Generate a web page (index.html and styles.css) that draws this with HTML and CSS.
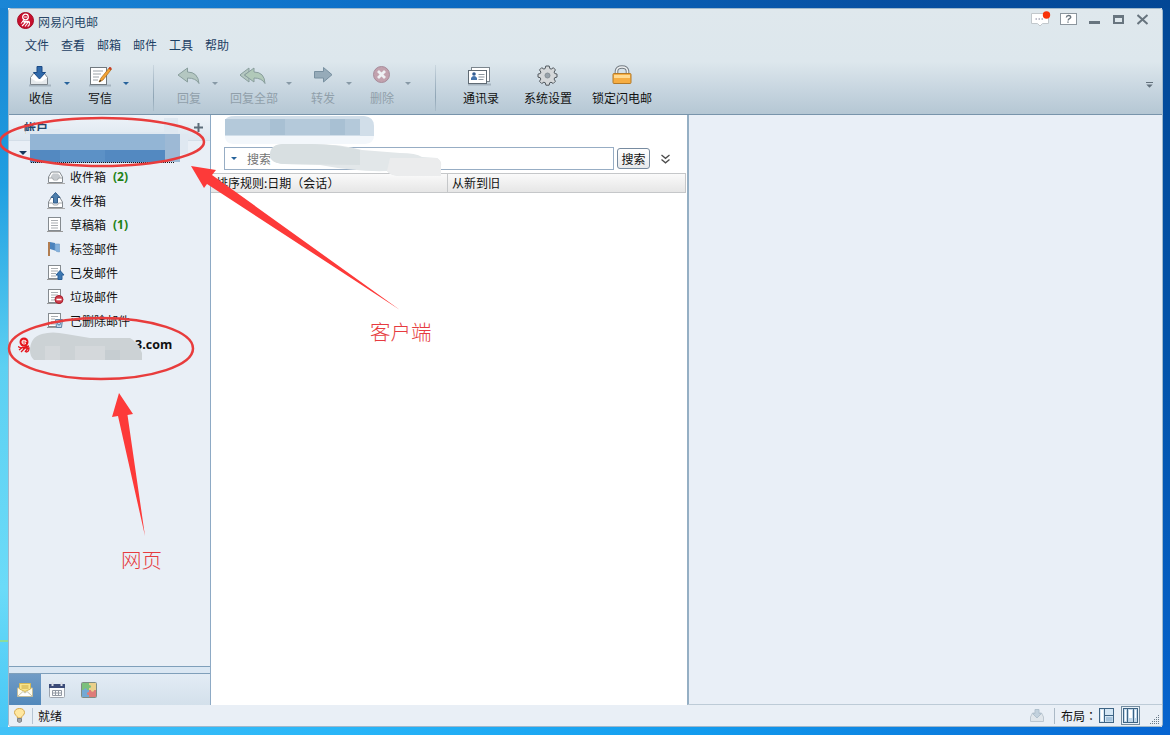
FILE: index.html
```html
<!DOCTYPE html>
<html lang="zh-CN">

<head>
    <meta charset="UTF-8">
    <title>网易闪电邮</title>
    <link rel="stylesheet" href="styles.css">
</head>

<body>
    <div class="window">
        <div class="header">
            <div class="title-bar">
                <svg class="logo" width="17" height="17" viewBox="0 0 17 17">
                    <circle cx="8.5" cy="8.5" r="8" fill="#c8102e" stroke="#a30d24" />
                    <circle cx="8.5" cy="5" r="2.8" fill="none" stroke="#fff" stroke-width="1.3" />
                    <path d="M7 5h3M5 9.3h7.5M7 8L4 11.5M6.5 10.3h6q0 4-2 4M8.500 10.5L5 14M11 10.5L8 14.5" fill="none" stroke="#fff" stroke-width="1.1" />
                </svg>
                <span class="title">网易闪电邮</span>
                <div class="window-buttons">
                    <svg width="20" height="18" viewBox="0 0 20 18">
                        <path d="M.5 3.500h17v10h-6l-2.500 2.500-2.500-2.500h-6z" fill="#fff" stroke="#c2c8cc" />
                        <path d="M4.500 9h1.500M7.500 9h1.500M10.500 9h1.500" stroke="#aab" stroke-width="1.500" />
                        <circle cx="15.500" cy="5" r="3.700" fill="#f8330a" />
                    </svg>
                    <svg width="17" height="18" viewBox="0 0 17 18">
                        <rect x=".5" y="3.500" width="16" height="11" fill="#fff" stroke="#8c969e" />
                        <path d="M6.300 7.500q.3-2 2.300-2t2.200 1.500q0 1-1.300 1.700t-1.300 1.700M8 11.500v1.300" fill="none" stroke="#6a757e" stroke-width="1.400" />
                    </svg>
                    <svg width="12" height="18" viewBox="0 0 12 18"><path d="M0 12.500h11" stroke="#68757f" stroke-width="3" /></svg>
                    <svg width="12" height="18" viewBox="0 0 12 18"><path d="M1 13.500v-8M10 5.500v8" stroke="#68757f" stroke-width="2" /><path d="M0 6.500h11" stroke="#68757f" stroke-width="3" /><path d="M0 13h11" stroke="#68757f" stroke-width="2" /></svg>
                    <svg width="12" height="18" viewBox="0 0 12 18"><path d="M.5 5l10 9M10.500 5l-10 9" stroke="#68757f" stroke-width="2" /></svg>
                </div>
            </div>

            <div class="menu">
                <span>文件</span>
                <span>查看</span>
                <span>邮箱</span>
                <span>邮件</span>
                <span>工具</span>
                <span>帮助</span>
            </div>

            <div class="toolbar">
                <div class="tool receive">
                    <svg width="24" height="24" viewBox="0 0 24 24">
                        <path d="M2 20.500h22" stroke="#8d9da9" stroke-width="2" opacity=".6" />
                        <path d="M3.500 12.500l3-4h11l3 4v7h-17z" fill="#fff" stroke="#7c858c" />
                        <path d="M4 19v-6l5 3.500h6l5-3.500v6z" fill="#e5e9ec" />
                        <path d="M10 1.500h5v6h3.500l-6 6.500-6-6.500h3.500z" fill="#2f69aa" stroke="#1c4b85" />
                    </svg>
                    <span>收信</span>
                </div>
                <i class="arrow"></i>
                <div class="tool compose">
                    <svg width="24" height="24" viewBox="0 0 24 24">
                        <path d="M1 20.500h22" stroke="#8d9da9" stroke-width="2" opacity=".6" />
                        <rect x="2.500" y="2.500" width="16" height="17" fill="#fff" stroke="#71797f" />
                        <path d="M5 6h10M5 9h8M5 12h6M5 15h5" stroke="#9ba2a8" />
                        <path d="M11 17l2-4 8.500-10.500 2 1.700L15 15z" fill="#f3a334" stroke="#a86a1b" stroke-width=".7" />
                        <path d="M11 17l1-2 1.500 1z" fill="#222" />
                        <path d="M20.500 3.500l2 1.700 1.200-1.500q-.4-2-2-1.700z" fill="#c83d25" />
                    </svg>
                    <span>写信</span>
                </div>
                <i class="arrow"></i>
                <div class="separator"></div>
                <div class="tool disabled reply">
                    <svg width="24" height="24" viewBox="0 0 24 24"><path d="M10.500 3v4q10.500 0 11.500 11.500-3-5.500-11.500-5.500v4L1 10z" fill="#b4c7c1" stroke="#899e9d" /></svg>
                    <span>回复</span>
                </div>
                <i class="arrow disabled"></i>
                <div class="tool disabled reply-all">
                    <svg width="28" height="24" viewBox="0 0 28 24"><path d="M9 3L-.2 10 9 17v-3.500L4.500 10 9 6.500z" fill="#b4c7c1" stroke="#899e9d" /><path d="M14 3v4q10.500 0 11 11.500-3-5.500-11-5.500v4L4.500 10z" fill="#b1c9b9" stroke="#899e9d" /></svg>
                    <span>回复全部</span>
                </div>
                <i class="arrow disabled"></i>
                <div class="tool disabled forward">
                    <svg width="24" height="24" viewBox="0 0 24 24"><path d="M3.500 6.500h9v-4l8.500 7.200-8.500 7.300v-4h-9z" fill="#96abb9" stroke="#7890a0" /></svg>
                    <span>转发</span>
                </div>
                <i class="arrow disabled"></i>
                <div class="tool disabled delete">
                    <svg width="24" height="24" viewBox="0 0 24 24">
                        <circle cx="11.500" cy="9.500" r="8" fill="#c2a2ae" stroke="#a78c9b" />
                        <path d="M8 6l7 7M15 6l-7 7" stroke="#eef1f4" stroke-width="2.800" />
                    </svg>
                    <span>删除</span>
                </div>
                <i class="arrow disabled"></i>
                <div class="separator second"></div>
                <div class="tool contacts">
                    <svg width="26" height="24" viewBox="0 0 26 24">
                        <path d="M-1 19.500h24" stroke="#8d9da9" stroke-width="2" opacity=".6" />
                        <rect x="3.500" y="2.500" width="18" height="14" fill="#fff" stroke="#7b858d" />
                        <rect x=".5" y="5.500" width="18" height="13" fill="#fff" stroke="#606b74" />
                        <circle cx="6" cy="9" r="1.800" fill="#315b91" />
                        <path d="M3 15v-2q1-2 3-2t3 2v2z" fill="#4474ad" />
                        <path d="M10.500 9.500h6M10.500 12h6M10.500 14.500h5" stroke="#8d979f" />
                    </svg>
                    <span>通讯录</span>
                </div>
                <div class="tool settings">
                    <svg width="24" height="24" viewBox="0 0 24 24">
                        <g fill="#d5d8da" stroke="#51585e">
                            <path d="M9.800 1h3.400l.6 2.500 1.400.6 2.200-1.400 2 2.200-1.300 2.200.6 1.400 2.300.6v3l-2.300.6-.6 1.400 1.300 2.200-2.200 2.200-2.200-1.300-1.300.6-.6 2.400H9.900l-.6-2.400-1.400-.6-2.200 1.300-2.200-2.200 1.300-2.200-.6-1.400L2 12.100v-3l2.300-.6.6-1.400-1.400-2.200 2.200-2.200 2.200 1.400 1.300-.6z" />
                            <circle cx="11.500" cy="10.500" r="2.500" fill="#98a2aa" stroke="#868f96" />
                        </g>
                    </svg>
                    <span>系统设置</span>
                </div>
                <div class="tool lock">
                    <svg width="24" height="24" viewBox="0 0 24 24">
                        <path d="M6.500 9V6q.5-4 5.500-4t5.500 4v3" fill="none" stroke="#747c83" stroke-width="3.600" />
                        <path d="M6.500 9V6q.5-4 5.500-4t5.500 4v3" fill="none" stroke="#eef1f2" stroke-width="1.600" />
                        <rect x="3" y="8.500" width="18" height="10" rx="1" fill="#f6ad42" stroke="#b37a29" />
                        <path d="M4 10h16v3H4z" fill="#ffda91" />
                    </svg>
                    <span>锁定闪电邮</span>
                </div>
                <svg class="overflow" width="7" height="7" viewBox="0 0 7 7"><path d="M0 .5h7" stroke="#63717c" /><path d="M.3 2.500h6.400L3.500 5.800z" fill="#63717c" /></svg>
            </div>
        </div>

        <div class="content">
            <div class="sidebar">
                <div class="account-header"><span>帐户</span>
                    <svg width="9" height="9" viewBox="0 0 9 9"><path d="M4.500 0v9M0 4.500h9" stroke="#5c6c79" stroke-width="2" /></svg>
                </div>
                <div class="account"><i class="arrow"></i></div>
                <div class="folders">
                    <div class="folder">
                        <svg width="18" height="18" viewBox="0 0 18 18"><path d="M0 15.500h18" stroke="#aaa" /><path d="M1.500 14.500V9l3-5h8l3 5v5.500z" fill="#fff" stroke="#858b90" /><path d="M4 8l2-2.500h5L13.500 8v2h-2l-1 1.500h-4L5.500 10H4z" fill="#c6cace" /><path d="M2 10h3.500l1 2h4l1-2H15" fill="none" stroke="#a3a8ac" /></svg>
                        <span>收件箱</span><b>(2)</b>
                    </div>
                    <div class="folder">
                        <svg width="18" height="18" viewBox="0 0 18 18"><path d="M0 16.500h18" stroke="#aaa" /><path d="M1.500 15.500V10l3-5h8l3 5v5.500z" fill="#fff" stroke="#858b90" /><path d="M2 11h3.500l1 2h4l1-2H15" fill="none" stroke="#a3a8ac" /><path d="M6.500 11V5.500H4l4.500-5 4.500 5h-2.500V11z" fill="#4d7eac" stroke="#345e8b" /></svg>
                        <span>发件箱</span>
                    </div>
                    <div class="folder">
                        <svg width="18" height="18" viewBox="0 0 18 18"><path d="M0 15.500h16" stroke="#999" /><rect x="1.500" y="1.500" width="12" height="13" fill="#fff" stroke="#858b90" /><path d="M4 4.500h7M4 7h7M4 9.500h7M4 12h7" stroke="#a9adb1" /></svg>
                        <span>草稿箱</span><b>(1)</b>
                    </div>
                    <div class="folder">
                        <svg width="18" height="18" viewBox="0 0 18 18"><path d="M2 2v14" stroke="#b27d50" stroke-width="2" /><path d="M3 2l5 1v7.500L3 9z" fill="#4b83bd" /><path d="M8 4h4.500v8Q9 12 8 10z" fill="#82b0dc" stroke="#6b99c8" stroke-width=".6" /></svg>
                        <span>标签邮件</span>
                    </div>
                    <div class="folder">
                        <svg width="18" height="18" viewBox="0 0 18 18"><path d="M0 15.500h14" stroke="#999" /><rect x="1.500" y="1.500" width="12" height="13" fill="#fff" stroke="#858b90" /><path d="M4 4.500h7M4 7h7M4 9.500h5M4 12h5" stroke="#a9adb1" /><path d="M11 15.500V11H9l4-4.500 4 4.500h-2v4.500z" fill="#3c77b1" stroke="#285f98" /></svg>
                        <span>已发邮件</span>
                    </div>
                    <div class="folder">
                        <svg width="18" height="18" viewBox="0 0 18 18"><path d="M0 15.500h14" stroke="#999" /><rect x="1.500" y="1.500" width="12" height="13" fill="#fff" stroke="#858b90" /><path d="M4 4.500h7M4 7h7M4 9.500h5M4 12h4" stroke="#a9adb1" /><circle cx="12" cy="11.500" r="4" fill="#d03c4a" stroke="#a9202f" /><path d="M9.500 11.500h5" stroke="#fff" stroke-width="1.600" /></svg>
                        <span>垃圾邮件</span>
                    </div>
                    <div class="folder">
                        <svg width="18" height="18" viewBox="0 0 18 18"><path d="M0 15.500h14" stroke="#999" /><rect x="1.500" y="1.500" width="12" height="13" fill="#fff" stroke="#858b90" /><path d="M4 4.500h7M4 7h4M4 9.500h4M4 12h4" stroke="#a9adb1" /><path d="M8.500 7.500h7l-1 8h-5z" fill="#c2d7e8" stroke="#5f83a4" /><circle cx="12" cy="11.500" r="1.500" fill="none" stroke="#4d7dac" /></svg>
                        <span>已删除邮件</span>
                    </div>
                </div>
                <div class="web-account">
                    <svg width="12" height="16" viewBox="0 0 12 16"><circle cx="6" cy="5" r="4.500" fill="#e5141c" /><path d="M4 5h4M8 6.500q-4 1.500-4-1.500t4-1v1" fill="none" stroke="#fff" /><path d="M0 9.500l3 1.500 8-2M1 13l4-3M3 15l5-5M5 11h6q0 4-3 4M7 15l3-4" fill="none" stroke="#e5141c" stroke-width="1.300" /></svg>
                    <b>3.com</b>
                </div>
                <div class="splitter"></div>
                <div class="nav">
                    <div class="nav-item active">
                        <svg width="16" height="16" viewBox="0 0 16 16"><path d="M.5 6h15v8.500H.5z" fill="#fffbea" stroke="#c3bd9c" /><path d="M2.500 1.500h11V7L8 9.500 2.500 7z" fill="#f9e58c" stroke="#d6b957" /><path d="M4.500 4h7M4.500 6h7" stroke="#c9a843" /><path d="M1 14l5-4.500 2 1.500 2-1.500 5 4.500" fill="#fff" stroke="#c8c3a7" /></svg>
                    </div>
                    <div class="nav-item">
                        <svg width="16" height="16" viewBox="0 0 16 16"><rect x=".5" y="2.500" width="15" height="13" rx="1" fill="#fafbfc" stroke="#9da4ae" /><path d="M0 2h16v4H0z" fill="#3b4b78" /><path d="M3.500 0v4M12.500 0v4" stroke="#d9dde5" stroke-width="2" /><path d="M3.500 8.500h9v5h-9zM3.500 11h9M6.500 8.500v5M9.500 8.500v5" fill="none" stroke="#9299a3" /></svg>
                    </div>
                    <div class="nav-item">
                        <svg width="16" height="16" viewBox="0 0 16 16"><path d="M1 1h7v7H1z" fill="#7cc07c" /><path d="M8 1h7v7H8z" fill="#ead08a" /><path d="M1 8h7v7H1z" fill="#73a9d4" /><path d="M8 8h7v7H8z" fill="#de7c79" /><circle cx="8.500" cy="4.500" r="1.500" fill="#7cc07c" /><circle cx="11.500" cy="8" r="1.700" fill="#ead08a" /><circle cx="7.500" cy="11.500" r="1.500" fill="#de7c79" /><circle cx="4.500" cy="7.800" r="1.600" fill="#73a9d4" /><rect x=".5" y=".5" width="15" height="15" rx="1" fill="none" stroke="#7f8c83" /></svg>
                    </div>
                </div>
            </div>

            <div class="mail-list">
                <div class="search">
                    <div class="search-box"><i class="arrow"></i><span>搜索</span></div>
                    <div class="search-button">搜索</div>
                    <svg width="9" height="10" viewBox="0 0 9 10"><path d="M.5 1l4 3.300 4-3.300M.5 5.500l4 3.300 4-3.300" fill="none" stroke="#4c4c4c" stroke-width="1.300" /></svg>
                </div>
                <div class="sort">
                    <div class="sort-rule">排序规则:日期<span class="punct" lang="zh-TW">（</span>会话<span class="punct" lang="zh-TW">）</span></div>
                    <div class="sort-order">从新到旧</div>
                </div>
            </div>

            <div class="preview"></div>
        </div>

        <div class="status">
            <svg width="11" height="15" viewBox="0 0 11 15"><path d="M3.500 10Q3.500 8.500 2 7.500 .5 6 .5 4.500.8.600 5.500.5q4.700.1 5 4 0 1.500-1.500 3Q7.500 8.500 7.500 10z" fill="#ffe7a0" stroke="#d5a74a" /><path d="M3.500 10.500h4v3l-2 1-2-1z" fill="#a3a6a9" stroke="#7e8285" /></svg>
            <div class="status-text">就绪</div>
            <div class="status-right">
                <svg width="14" height="16" viewBox="0 0 14 16"><path d="M.5 13.500V9l2-4h9l2 4v4.500z" fill="#e0e6eb" stroke="#bdc7d0" /><path d="M5 1.500h4v4h2.500L7 10 2.500 5.500H5z" fill="#c2d1dd" stroke="#b1c1ce" /></svg>
                <div class="layout-label">布局<span class="punct" lang="zh-TW">：</span></div>
                <svg width="15" height="15" viewBox="0 0 15 15"><rect x=".5" y=".5" width="14" height="14" fill="#d5e7f5" stroke="#3e6484" /><path d="M5.500 1v13M6 7.500h8" stroke="#3e6484" /><path d="M2 2h2v11H2z" fill="#fff" /><path d="M7 9h6.500v4.500H7z" fill="#a6c4dd" /></svg>
                <svg width="19" height="19" viewBox="0 0 19 19"><rect x=".5" y=".5" width="18" height="18" fill="#e8f1f8" stroke="#718a9e" /><rect x="2.500" y="2.500" width="14" height="14" fill="#c2d8ea" stroke="#3e6484" /><path d="M6.500 3v13M12.500 3v13" stroke="#3e6484" /><path d="M8 4h3v8H8zM4 4h1v11H4zM14 4h1v8h-1z" fill="#fff" /></svg>
                <svg class="grip" width="10" height="10" viewBox="0 0 10 10"><path d="M8 0h1v1H8zM6 2h1v1H6zM8 2h1v1H8zM4 4h1v1H4zM6 4h1v1H6zM8 4h1v1H8zM2 6h1v1H2zM4 6h1v1H4zM6 6h1v1H6zM8 6h1v1H8zM0 8h1v1H0zM2 8h1v1H2zM4 8h1v1H4zM6 8h1v1H6zM8 8h1v1H8z" fill="#687987" /></svg>
            </div>
        </div>
    </div>

    <!-- blurred names, circles and arrows -->
    <svg class="annotations" width="1170" height="735" viewBox="0 0 1170 735">
        <path d="M26 131h18v-2h16v3h104v-14h14v16h10v20h-8V135H26z" fill="#dfe8f1" />
        <path d="M30 134h150v17H30z" fill="#93b5d5" />
        <path d="M30 150h135v12.500H30z" fill="#5389c1" />
        <path d="M60 150h45v12H60z" fill="#5c91c6" />
        <path d="M165 134h15v28h-15z" fill="#9db9d5" />
        <path d="M31 162.500h144" stroke="#111" stroke-dasharray="1 1" />

        <path d="M225 121q1-5 10-5h129q10 1 10 10v10q0 7-9 8H233q-9-1-8-9z" fill="#f3f7fb" />
        <path d="M225 121q1-5 10-5h129q10 1 10 10v10H225z" fill="#d1dee9" />
        <path d="M225 119h135v16H225z" fill="#b4c9da" />
        <path d="M270 119h15v16h-15zM330 119h15v16h-15z" fill="#a8c0d3" />

        <path d="M270 155q0-10 12-11h30q30 0 50 6l38 3q16 0 22 4l15 1q5 3 4 9v9h-39q-12 0-15-5-30 1-67-6l-36-1q-14-1-14-9z" fill="#e2e7e9" />
        <path d="M270 155q0-10 12-11h30q22 0 48 6v15l-76-1q-14-1-14-9z" fill="#d8dfe1" />
        <path d="M390 158h47q5 3 4 9v9h-39q-12 0-15-5z" fill="#ebeced" />

        <path d="M30 351q0-14 12-17 10-3 24 0l24 4h40q8 4 12 15v7H34q-4-4-4-9z" fill="#ccd2d5" />
        <path d="M45 346h15v14H45zM75 346h30v14H75z" fill="#d4d8db" />
        <path d="M105 350h15v10h-15z" fill="#c6cdd1" />

        <ellipse cx="102" cy="142" rx="102" ry="24" class="circle" />
        <ellipse cx="101" cy="348.500" rx="92" ry="30.500" class="circle" />
        <path d="M191 166l25 4-4 5L400 310 207 184l-3 4z" class="pointer" />
        <path d="M119 393l14 21-5.500 1L145 536 118 416l-6 1z" class="pointer" />
        <text x="370" y="340" class="note">客户端</text>
        <text x="121" y="568" class="note">网页</text>
    </svg>
</body>

</html>
```
FILE: styles.css
```css
* {
    box-sizing: border-box;
}

body {
    margin: 0;
    height: 735px;
    padding: 8px 7px 8px 8px;
    overflow: hidden;
    font-family: "Noto Sans CJK SC", sans-serif;
    font-size: 12px;
    line-height: 16px;
    color: #111;
    background:
        linear-gradient(#8bdc9c, #8bdc9c) 0 640px / 8px 2px no-repeat,
        linear-gradient(90deg, #1b86d6, #0d70c8 30%, #0750a2 75%, #034795) 0 0 / 100% 8px no-repeat,
        linear-gradient(90deg, #43c2f7, #28b5f8 30%, #129bee 60%, #0664d1) 0 727px / 100% 8px no-repeat,
        linear-gradient(#1780d0, #209fe1 25%, #5dd0f2 50%, #6bdbf8 80%, #45c5f5) 0 0 / 8px 100% no-repeat,
        linear-gradient(#034896, #0354ab 50%, #0664ce) 100% 0 / 8px 100% no-repeat;
}

svg {
    display: block;
    flex: none;
}

.window {
    display: flex;
    flex-direction: column;
    height: 719px;
    border: 1px solid #9fb8cb;
    border-radius: 3px;
    overflow: hidden;
    background: #e9eff7;
}

.header {
    height: 106px;
    flex: none;
    border-bottom: 1px solid #7894ab;
    background: linear-gradient(#dfe8ed, #dde7ed 50%, #c8d6e0 76%, #b5c7d4);
}

.title-bar {
    display: flex;
    height: 27px;
    padding: 3px 13px 0 8px;
}

.title {
    margin: 2px 0 0 4px;
    color: #2a4968;
}

.window-buttons {
    display: flex;
    gap: 12px;
    margin-left: auto;
    margin-top: -2px;
}

.window-buttons svg:first-child {
    margin-right: -3px;
}

.menu {
    display: flex;
    gap: 12px;
    height: 22px;
    padding: 1px 0 0 16px;
    color: #1d4064;
}

.toolbar {
    display: flex;
    align-items: flex-start;
    height: 56px;
    padding: 7px 9px 0 11px;
}

.tool {
    display: flex;
    flex-direction: column;
    align-items: center;
    width: 42px;
    flex: none;
    white-space: nowrap;
}

.tool svg {
    margin-bottom: 1px;
}

.tool.receive svg {
    margin-left: -4px;
}

.tool.disabled {
    color: #909faa;
}

.tool.reply-all {
    width: 60px;
    margin-left: -3px;
}

.tool.forward {
    margin-left: 1px;
}

.tool.contacts {
    width: 60px;
    margin-left: 15px;
}

.tool.settings,
.tool.lock {
    width: 74px;
}

.arrow {
    flex: none;
    width: 0;
    border: 3px solid transparent;
    border-top-color: #27639b;
    border-bottom: 0;
}

.toolbar .arrow {
    margin: 17px 9px 0 2px;
}

.arrow.disabled {
    border-top-color: #8799a6;
}

.separator {
    width: 1px;
    height: 46px;
    margin-right: 14px;
    margin-left: 15px;
    background: linear-gradient(rgba(140, 160, 175, .2), #8fa5b5 70%, rgba(140, 160, 175, .3));
}

.separator.second {
    margin-right: 0;
}

.overflow {
    margin: 17px 0 0 auto;
}

.content {
    display: flex;
    height: 590px;
}

.sidebar {
    display: flex;
    flex-direction: column;
    width: 202px;
    border-right: 1px solid #8daac5;
    background: #e9eff6;
}

.account-header {
    display: flex;
    align-items: center;
    justify-content: space-between;
    height: 26px;
    padding: 0 7px 0 15px;
    font-weight: bold;
    color: #24476b;
    border-bottom: 1px solid #d4dee8;
    background: linear-gradient(#eef3f9, #dde7ef);
}

.account {
    height: 24px;
    padding: 10px 0 0 10px;
}

.account .arrow {
    display: block;
    border-width: 4px 4px 0;
    border-top-color: #16365b;
}

.folder {
    display: flex;
    align-items: center;
    height: 24px;
    padding-left: 38px;
}

.folder span {
    margin-left: 5px;
}

.folder b {
    margin-left: 7px;
    font-family: "Open Sans", sans-serif;
    color: #1d8215;
}

.web-account {
    display: flex;
    align-items: center;
    height: 24px;
    padding-left: 9px;
}

.web-account b {
    margin-left: 105px;
    font-family: "Open Sans", sans-serif;
    font-size: 12.5px;
}

.splitter {
    height: 8px;
    margin-top: auto;
    border-top: 1px solid #7f9fba;
    border-bottom: 1px solid #7f9fba;
    background: #dae7f3;
}

.nav {
    display: flex;
    height: 31px;
    background: linear-gradient(#e3ecf5, #d3e0eb);
}

.nav-item {
    display: grid;
    place-items: center;
    width: 32px;
}

.nav-item.active {
    background: linear-gradient(#709bc5, #5288bb);
}

.mail-list {
    width: 476px;
    padding-top: 32px;
    background: #fff;
}

.search {
    display: flex;
    height: 26px;
    padding-left: 13px;
}

.search-box {
    display: flex;
    align-items: center;
    width: 390px;
    height: 23px;
    padding-left: 6px;
    border: 1px solid #97adc4;
    color: #737373;
}

.search-box span {
    margin-left: 10px;
}

.search-button {
    width: 33px;
    height: 21px;
    margin: 1px 11px 0 3px;
    border: 1px solid #778ba0;
    border-radius: 3px;
    text-align: center;
    line-height: 19px;
    background: linear-gradient(#fff, #e8eaec);
}

.search > svg {
    margin-top: 7px;
}

.sort {
    display: flex;
    height: 20px;
    margin-right: 1px;
    border: 1px solid #c5c7c9;
    border-left: 0;
    background: linear-gradient(#fafafa, #e6e6e6);
    line-height: 17px;
}

.sort-rule {
    width: 237px;
    padding-left: 5px;
    border-right: 1px solid #c5c7c9;
}

.sort-order {
    padding-left: 4px;
}

.punct {
    font-family: "Noto Sans CJK TC", sans-serif;
}

.preview {
    flex: 1;
    border-left: 2px solid #95afc4;
    border-bottom: 1px solid #bdcbd7;
    background: #e9eff7;
}

.status {
    display: flex;
    align-items: center;
    flex: 1;
    padding-left: 5px;
    background: #e9eff6;
}

.status-text {
    margin-left: 7px;
    padding-left: 5px;
    border-left: 1px solid #b7c4d3;
}

.status-right {
    display: flex;
    align-items: center;
    margin-left: auto;
}

.layout-label {
    width: 45px;
    margin-left: 10px;
    padding-left: 6px;
    border-left: 1px solid #abb9c6;
    white-space: nowrap;
}

.status-right svg + svg {
    margin-left: 7px;
}

.status-right .grip {
    margin-top: 8px;
    margin-right: 2px;
    margin-left: 10px;
}

.annotations {
    position: absolute;
    top: 0;
    left: 0;
    pointer-events: none;
}

.circle {
    fill: none;
    stroke: #e83c3c;
    stroke-width: 2.5;
}

.pointer {
    fill: #fd3a39;
}

.note {
    font-size: 20.5px;
    font-weight: 300;
    fill: #e63b40;
}
```
